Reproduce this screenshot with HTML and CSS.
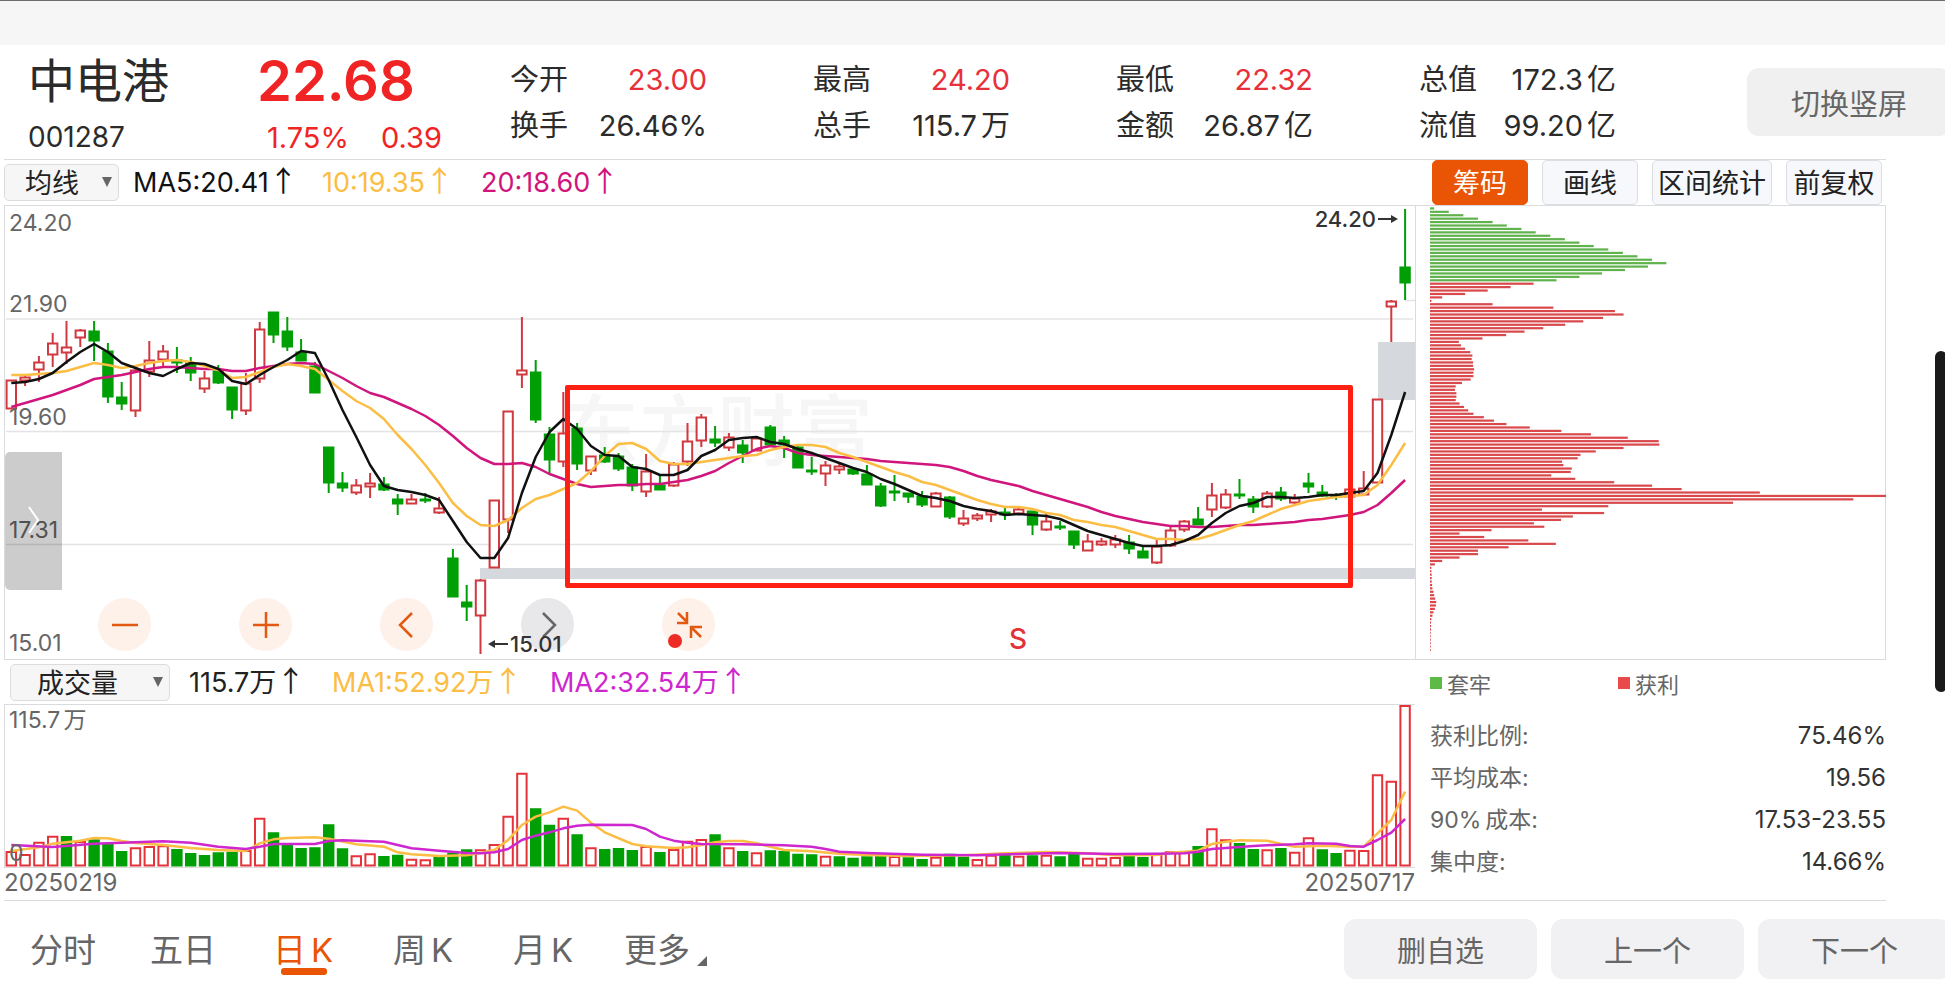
FILE: index.html
```html
<!DOCTYPE html>
<html lang="zh-CN">
<head>
    <meta charset="UTF-8">
    <meta name="viewport" content="width=device-width, initial-scale=1.0">
    <title>中电港 001287</title>
    <link rel="stylesheet" href="styles.css">
</head>
<body>
    <div class="status-bar"></div>

    <header class="header">
        <div class="stock">
            <h1>中电港</h1>
            <span>001287</span>
        </div>
        <div class="price">
            <strong>22.68</strong>
            <div class="change"><span>1.75%</span><span>0.39</span></div>
        </div>
        <dl class="quotes">
            <div><dt>今开</dt><dd class="up">23.00</dd></div>
            <div><dt>最高</dt><dd class="up">24.20</dd></div>
            <div><dt>最低</dt><dd class="up">22.32</dd></div>
            <div><dt>总值</dt><dd>172.3<i>亿</i></dd></div>
            <div><dt>换手</dt><dd>26.46%</dd></div>
            <div><dt>总手</dt><dd>115.7<i>万</i></dd></div>
            <div><dt>金额</dt><dd>26.87<i>亿</i></dd></div>
            <div><dt>流值</dt><dd>99.20<i>亿</i></dd></div>
        </dl>
        <button class="big-btn rotate-btn">切换竖屏</button>
    </header>

    <main class="main">
        <div class="toolbar">
            <label class="picker">
                <select aria-label="主图指标">
                    <option>均线</option>
                </select>
                <svg width="10" height="10" viewBox="0 0 10 10"><path d="M0 0H10L5 10Z" fill="#666"/></svg>
            </label>
            <span class="ma ma5">MA5:20.41<b>↑</b></span>
            <span class="ma ma10">10:19.35<b>↑</b></span>
            <span class="ma ma20">20:18.60<b>↑</b></span>
        </div>
        <div class="tools">
            <button class="tool active">筹码</button>
            <button class="tool">画线</button>
            <button class="tool wide">区间统计</button>
            <button class="tool">前复权</button>
        </div>

        <section class="k-chart">
            <div class="watermark">东方财富</div>
            <svg class="plot" id="kPlot" viewBox="5 206 1410 453" preserveAspectRatio="none"></svg>
            <span class="axis y1">24.20</span>
            <span class="axis y2">21.90</span>
            <span class="axis y3">19.60</span>
            <span class="axis y4">17.31</span>
            <span class="axis y5">15.01</span>
            <button class="drawer" aria-label="展开">
                <svg width="12" height="28" viewBox="0 0 12 28"><path d="M1 1L10 14L1 27" fill="none" stroke="#fff" stroke-width="2"/></svg>
            </button>
            <div class="controls">
                <button aria-label="缩小">
                    <svg width="28" height="28" viewBox="0 0 28 28"><path d="M1 14H27"/></svg>
                </button>
                <button aria-label="放大">
                    <svg width="28" height="28" viewBox="0 0 28 28"><path d="M1 14H27M14 1V27"/></svg>
                </button>
                <button aria-label="左移">
                    <svg width="28" height="28" viewBox="0 0 28 28"><path d="M19 2L7 14L19 26"/></svg>
                </button>
                <button class="off" aria-label="右移">
                    <svg width="28" height="28" viewBox="0 0 28 28"><path d="M9 2L21 14L9 26"/></svg>
                </button>
                <button aria-label="收起">
                    <svg width="28" height="28" viewBox="0 0 28 28"><path d="M3 2L12 11M12 1V12H2M26 26L17 17M16 27V16H27"/></svg>
                    <em class="dot"></em>
                </button>
            </div>
            <span class="mark mark-low"><svg width="20" height="10" viewBox="0 0 20 10"><path d="M0 5L7 1V9Z" fill="#333"/><path d="M5 5H20" stroke="#333" stroke-width="2"/></svg>15.01</span>
            <span class="mark mark-high">24.20<svg width="20" height="10" viewBox="0 0 20 10"><path d="M20 5L13 1V9Z" fill="#333"/><path d="M0 5H15" stroke="#333" stroke-width="2"/></svg></span>
            <span class="sell">S</span>
            <div class="frame"></div>
        </section>

        <section class="chips">
            <svg class="plot" id="chipPlot" viewBox="1416 206 469 453" preserveAspectRatio="none"></svg>
        </section>

        <section class="volume">
            <div class="toolbar">
                <label class="picker vol-picker">
                    <select aria-label="副图指标">
                        <option>成交量</option>
                    </select>
                    <svg width="10" height="10" viewBox="0 0 10 10"><path d="M0 0H10L5 10Z" fill="#666"/></svg>
                </label>
                <span class="ma vol">115.7万<b>↑</b></span>
                <span class="ma vol1">MA1:52.92万<b>↑</b></span>
                <span class="ma vol2">MA2:32.54万<b>↑</b></span>
            </div>
            <div class="v-chart">
                <svg class="plot" id="vPlot" viewBox="5 705 1410 162" preserveAspectRatio="none"></svg>
                <span class="axis v1">115.7<i>万</i></span>
                <span class="axis v2">0</span>
            </div>
            <div class="dates"><span>20250219</span><span>20250717</span></div>
        </section>

        <section class="chip-info">
            <div class="legend">
                <span class="trapped">套牢</span>
                <span class="profit">获利</span>
            </div>
            <dl>
                <div><dt>获利比例:</dt><dd>75.46%</dd></div>
                <div><dt>平均成本:</dt><dd>19.56</dd></div>
                <div><dt>90%<i>成本</i>:</dt><dd>17.53-23.55</dd></div>
                <div><dt>集中度:</dt><dd>14.66%</dd></div>
            </dl>
        </section>
    </main>

    <footer class="footer">
        <nav class="tabs">
            <a href="#">分时</a>
            <a href="#">五日</a>
            <a href="#" class="active">日<i>K</i></a>
            <a href="#">周<i>K</i></a>
            <a href="#">月<i>K</i></a>
            <a href="#" class="more">更多</a>
        </nav>
        <button class="big-btn">删自选</button>
        <button class="big-btn">上一个</button>
        <button class="big-btn">下一个</button>
    </footer>

    <div class="scrollbar"></div>

    <script src="chart.js"></script>
</body>
</html>
```
FILE: styles.css
```css
* {
    margin: 0;
    padding: 0;
    box-sizing: border-box;
}

body {
    position: relative;
    background-color: #fff;
    color: #2b2b2b;
    font-family: Inter, "Noto Sans CJK SC", sans-serif;
    font-size: 29px;
    overflow: hidden;
}

button, select {
    font-family: inherit;
    border: none;
    cursor: pointer;
}

i, em {
    font-style: normal;
}

.status-bar {
    height: 45px;
    background-color: #f6f6f6;
    border-top: 1px solid #6e6a6e;
}

/* header */
.header {
    position: relative;
    display: flex;
    height: 114px;
    padding-left: 28px;
}

.stock {
    width: 229px;
}

.stock h1 {
    font-size: 47px;
    font-weight: 400;
    line-height: 72px;
}

.stock span {
    display: block;
    font-size: 28px;
    line-height: 40px;
}

.price {
    width: 253px;
    color: #f02424;
}

.price strong {
    display: block;
    font-size: 56px;
    font-weight: 600;
    line-height: 72px;
}

.change {
    display: flex;
    gap: 32px;
    padding-left: 10px;
    line-height: 42px;
}

.quotes {
    display: grid;
    grid-template-columns: repeat(4, 197px);
    grid-auto-rows: 46px;
    column-gap: 106px;
    padding-top: 12px;
    line-height: 46px;
}

.quotes div {
    display: flex;
    justify-content: space-between;
}

.quotes i {
    margin-left: 4px;
}

.up {
    color: #e8303a;
}

.big-btn {
    flex: none;
    width: 193px;
    height: 60px;
    border-radius: 12px;
    background-color: #f1f1f3;
    color: #666;
    font-size: 29px;
}

.rotate-btn {
    position: absolute;
    right: -6px;
    top: 23px;
    width: 204px;
    height: 68px;
    background-color: #f0f0f0;
}

/* charts */
.main {
    display: grid;
    grid-template-columns: 1fr 471px;
    grid-template-rows: 45px 455px 240px;
    margin: 0 59px 0 4px;
    border-top: 1px solid #dcdcdc;
    border-bottom: 1px solid #dcdcdc;
}

.toolbar {
    display: flex;
    align-items: center;
    height: 44px;
    font-size: 27px;
}

.picker {
    display: flex;
    align-items: center;
    position: relative;
    width: 115px;
    margin-right: 14px;
}

.picker select {
    appearance: none;
    width: 100%;
    height: 37px;
    padding: 2px 0 0 20px;
    border: 1px solid #dcdcdc;
    border-radius: 5px;
    background-color: #f6f6f6;
    color: #222;
    font-size: 27px;
}

.picker svg {
    position: absolute;
    right: 7px;
    pointer-events: none;
}

.vol-picker {
    width: 160px;
    margin-left: 6px;
    margin-right: 19px;
}

.vol-picker select {
    padding-left: 26px;
}

.ma {
    line-height: 44px;
    padding-top: 2px;
    white-space: nowrap;
}

.ma b {
    font-family: "Noto Sans CJK SC", sans-serif;
    font-size: 29px;
    font-weight: 400;
    line-height: 1;
}

.ma5 { width: 189px; color: #111; }
.ma10 { width: 159px; color: #fbbd44; }
.ma20 { color: #d0157d; }
.vol { width: 143px; color: #222; }
.vol1 { width: 218px; color: #fbbd44; }
.vol2 { color: #cf27cf; }

.tools {
    display: flex;
    justify-content: space-between;
    padding: 0 4px 0 17px;
}

.tool {
    width: 96px;
    padding-top: 2px;
    border: 1px solid #dcdee2;
    border-radius: 5px;
    background-color: #f7f8fb;
    color: #222;
    font-size: 27px;
    line-height: 42px;
    white-space: nowrap;
}

.tool.wide {
    width: 120px;
}

.tool.active {
    background-color: #e95504;
    border-color: #e95504;
    color: #fff;
}

.k-chart, .chips, .v-chart {
    position: relative;
    border: 1px solid #dadbdd;
    border-right: none;
}

.chips {
    border-right: 1px solid #dadbdd;
}

.plot {
    position: absolute;
    left: 0;
    top: 0;
    width: 100%;
    height: 100%;
    overflow: visible;
}

.axis {
    position: absolute;
    left: 4px;
    color: #666;
    font-size: 23px;
    line-height: 28px;
}

.axis i {
    margin-left: 3px;
}

.y1 { top: 3px; }
.y2 { top: 84px; }
.y3 { top: 197px; }
.y4 { top: 310px; }
.y5 { top: 423px; }
.v1 { top: 1px; }
.v2 { bottom: 0; }

.watermark {
    position: absolute;
    left: 556px;
    top: 176px;
    color: #f6f6f7;
    font-size: 78px;
    font-weight: 500;
    line-height: 100px;
}

.drawer {
    position: absolute;
    left: 0;
    top: 246px;
    width: 57px;
    height: 138px;
    border-radius: 5px 0 0 5px;
    background-color: rgba(0, 0, 0, 0.2);
}

.controls {
    position: absolute;
    left: 93px;
    bottom: 8px;
    display: flex;
    gap: 88px;
}

.controls button {
    position: relative;
    width: 53px;
    height: 53px;
    border-radius: 50%;
    background-color: #fef1ea;
}

.controls svg {
    display: block;
    margin: auto;
    fill: none;
    stroke: #e25a12;
    stroke-width: 2.5;
}

.controls .off {
    background-color: #e8e8eb;
}

.controls .off svg {
    stroke: #666;
}

.dot {
    position: absolute;
    left: 6px;
    top: 36px;
    width: 14px;
    height: 14px;
    border-radius: 50%;
    background-color: #ee2a24;
}

.mark {
    position: absolute;
    display: flex;
    align-items: center;
    gap: 2px;
    color: #333;
    font-size: 22px;
    font-weight: 500;
    line-height: 26px;
}

.mark-low {
    left: 483px;
    top: 425px;
}

.mark-high {
    right: 17px;
    top: 0;
}

.sell {
    position: absolute;
    left: 1004px;
    top: 416px;
    color: #e2333a;
    font-size: 28px;
    font-weight: 500;
    line-height: 34px;
}

.frame {
    position: absolute;
    left: 560px;
    top: 179px;
    width: 788px;
    height: 203px;
    border: 5px solid #ff2014;
    border-radius: 2px;
}

.v-chart {
    height: 164px;
}

.dates {
    display: flex;
    justify-content: space-between;
    color: #666;
    font-size: 24px;
    line-height: 29px;
}

/* chip summary */
.chip-info {
    padding-left: 15px;
    color: #666;
    font-size: 23px;
}

.legend {
    display: flex;
    height: 46px;
    margin-bottom: 9px;
    font-size: 22px;
}

.legend span {
    display: flex;
    align-items: center;
    gap: 5px;
    width: 188px;
}

.legend span::before {
    content: "";
    width: 12px;
    height: 12px;
    background-color: #5dba47;
}

.legend .profit::before {
    background-color: #e94b4b;
}

.chip-info dl div {
    display: flex;
    justify-content: space-between;
    line-height: 42px;
}

.chip-info dt i {
    margin-left: 4px;
}

.chip-info dd {
    color: #333;
    font-size: 24px;
}

/* footer */
.footer {
    display: flex;
    gap: 14px;
    height: 92px;
    padding-top: 18px;
    margin-right: -6px;
}

.tabs {
    display: flex;
    flex: 1;
    align-items: flex-start;
    padding-left: 3px;
}

.tabs a {
    position: relative;
    width: 120px;
    color: #666;
    font-size: 33px;
    line-height: 62px;
    text-align: center;
    text-decoration: none;
}

.tabs i {
    margin-left: 5px;
}

.tabs .active {
    color: #e95504;
}

.tabs .active::after {
    content: "";
    position: absolute;
    left: 38px;
    bottom: 6px;
    width: 46px;
    height: 7px;
    border-radius: 3px;
    background-color: #e95504;
}

.tabs .more {
    width: 108px;
}

.tabs .more::after {
    content: "";
    position: absolute;
    right: 4px;
    bottom: 15px;
    border-left: 10px solid transparent;
    border-bottom: 10px solid #666;
}

.scrollbar {
    position: absolute;
    right: -2px;
    top: 351px;
    width: 12px;
    height: 341px;
    border-radius: 6px;
    background-color: #1a1a1a;
}

/* svg parts */
.plot line, .plot polyline, .plot rect {
    vector-effect: non-scaling-stroke;
}

.plot polyline {
    fill: none;
    stroke-width: 2.5;
    stroke-linejoin: round;
}

.grid { stroke: #e4e4e6; stroke-width: 1.5; }
.gap { fill: #d5d8dc; }
.red { fill: #fff; stroke: #d0393f; stroke-width: 2; }
.green { fill: #009f05; stroke: #009f05; stroke-width: 2; }
.line5 { stroke: #111; }
.line10 { stroke: #fbbd44; }
.line20 { stroke: #d0157d; }
.vline2 { stroke: #cf27cf; }
.v-chart .red { stroke: #e5333a; }
.chip-up { fill: #5fb24c; }
.chip-down { fill: #d9494c; }
```
FILE: chart.js
```js
// one row per day: colour, high, body top, body bottom, low, volume top, volume colour if it differs
const days = `
r 380 380 409 409 603|r 376 377 381 386 612|r 356 362 370 382 575|r 333 343 355 367 557
r 321 347 353 364 558 g|r 329 330 338 347 573|g 321 331 341 361 568|g 343 351 397 403 580
g 382 397 404 410 603|r 368 370 411 417 592|r 341 360 372 377 588|r 345 351 360 366 586
g 347 360 363 373 597|g 357 363 373 381 609|r 371 378 389 393 615 g|g 365 371 383 384 607
g 387 387 410 419 605|r 373 383 411 415 600|r 322 329 379 383 503|g 312 312 335 343 547
g 317 331 347 351 583|g 339 352 361 361 594|g 362 366 393 393 592|g 447 447 483 493 523
g 472 483 488 492 595|r 479 485 493 495 616|r 473 483 487 498 610|g 477 484 490 491 618
g 494 499 504 515 614|r 494 499 504 504 626|g 493 499 501 503 628 r|r 497 508 513 514 620 g
g 549 558 597 597 608|g 585 602 607 621 598|r 579 580 616 654 598|r 500 500 568 568 582
r 411 411 520 533 497|r 317 370 375 388 368|g 360 372 420 423 475|g 427 434 460 475 524
r 392 433 462 467 503|g 423 428 464 470 553|r 456 456 471 475 592|g 447 455 462 463 597
g 453 456 469 471 594|g 464 467 486 491 600|r 454 471 492 497 588|g 476 485 490 490 606
r 462 464 486 487 597|r 423 441 462 466 572|r 414 417 441 447 567|g 426 439 443 447 553
r 433 437 448 451 592|g 440 445 453 463 603|r 437 438 451 451 607|g 425 427 445 447 601
g 436 440 445 458 603|g 445 447 468 468 611|g 457 470 472 475 613|r 461 465 474 486 617
r 462 466 470 474 619 g|g 467 469 474 475 623|g 465 474 485 485 619|g 483 486 506 507 618
g 475 491 493 501 618 r|g 493 493 497 503 622|g 491 496 505 507 627|r 492 493 507 507 620
g 496 497 517 519 611|r 510 518 524 526 620 g|r 513 515 519 521 627|r 509 511 515 522 614
g 507 512 515 520 610|r 508 509 514 514 617|g 511 511 525 535 616|r 514 521 530 531 614
g 521 526 528 530 619|g 531 531 545 549 611|r 534 541 551 551 623|r 538 541 545 546 623
r 535 539 545 548 621|g 535 542 549 554 617|g 545 551 558 558 621|r 539 546 563 564 610
r 527 530 546 547 604|r 520 521 530 532 604|g 507 519 525 525 588|r 483 495 510 517 535
r 489 494 508 509 568|g 479 494 496 499 579|g 496 499 507 513 597|r 491 493 507 508 598
g 487 492 499 501 594|r 494 498 503 505 605|g 473 483 487 493 562 r|g 485 492 496 497 598
g 493 495 497 500 609|r 489 489 497 497 599|r 471 488 495 495 600|r 399 399 483 483 373
r 300 301 307 342 392|g 209 267 283 300 165 r`.trim().split(/[|\n]/).map(d => d.split(' '));

const ma5 = [383,382,379,373,362,352,344,352,363,368,373,376,369,363,364,369,381,384,375,367,360,351,353,380,410,437,465,486,490,492,495,500,521,542,558,558,538,493,457,432,419,429,446,455,456,467,469,475,475,470,456,450,440,438,437,442,444,449,453,458,463,468,472,479,484,490,496,498,501,506,509,511,515,514,515,516,519,525,531,535,539,543,546,546,545,541,535,523,513,506,503,497,497,498,497,495,495,493,491,473,435,392];
const ma10 = [375,375,374,373,371,367,363,365,368,366,363,361,360,362,366,370,378,377,372,367,364,366,369,380,391,401,408,419,435,449,465,483,503,516,525,526,520,508,499,495,489,483,471,456,444,443,449,461,464,464,462,460,458,456,455,450,447,445,445,447,453,457,462,467,472,476,482,485,490,495,500,504,507,507,509,513,515,520,522,525,527,531,535,539,539,540,539,535,530,525,521,515,509,505,501,499,497,496,495,485,465,443];
const ma20 = [407,403,399,395,390,385,379,377,375,372,369,367,367,368,369,369,371,371,368,366,364,363,364,371,378,386,393,397,403,409,416,425,436,448,458,464,464,463,467,474,479,484,487,486,485,485,484,484,482,480,476,471,463,456,449,446,448,453,455,456,457,458,459,461,462,463,464,465,467,471,476,480,483,486,491,495,499,503,507,512,516,519,522,524,526,526,527,527,526,525,525,524,523,522,520,519,517,515,512,505,493,480];

// volume averages: day index, level
const vol1 = [[0,603],[2,592],[3,581],[5,572],[6,564],[7,565],[8,573],[9,579],[11,585],[13,594],[15,600],[17,603],[18,580],[19,568],[20,564],[22,562],[23,566],[25,583],[27,590],[28,607],[29,613],[31,618],[33,616],[34,609],[35,600],[36,570],[37,525],[38,500],[39,487],[40,470],[41,482],[42,518],[43,547],[45,582],[46,589],[48,594],[49,592],[50,585],[51,577],[52,573],[53,573],[54,580],[55,590],[56,600],[58,604],[60,611],[62,615],[65,618],[69,616],[72,610],[75,606],[78,610],[80,616],[83,615],[84,608],[86,602],[87,582],[88,575],[89,571],[91,572],[92,582],[93,590],[95,587],[97,590],[98,590],[99,550],[100,510],[101,425]];
const vol2 = [[0,585],[3,591],[6,581],[9,577],[11,574],[13,578],[15,590],[17,597],[18,590],[19,582],[22,582],[23,573],[24,571],[27,575],[28,585],[29,595],[31,602],[33,609],[34,610],[35,607],[36,597],[37,570],[38,557],[39,547],[40,535],[41,527],[42,524],[45,525],[46,537],[47,560],[48,572],[49,578],[50,582],[53,583],[56,586],[58,590],[59,597],[60,605],[62,609],[66,614],[70,616],[73,612],[76,609],[80,612],[83,611],[85,610],[86,605],[87,597],[88,594],[90,588],[92,584],[93,583],[94,580],[96,581],[97,588],[98,590],[99,570],[100,548],[101,507]];

// chip distribution, first 22 are above the current price
const chips = [12,54,96,138,180,221,263,304,346,388,430,471,513,555,597,639,680,627,561,495,430,364,
    298,232,166,101,35,4,180,355,532,557,498,441,389,326,272,219,151,83,89,101,116,122,120,124,124,127,125,125,117,92,
    74,72,76,76,74,85,98,110,125,155,184,220,287,378,463,569,658,660,557,477,433,425,380,384,408,405,349,418,530,639,
    724,949,1312,1218,872,513,322,501,411,377,299,329,177,85,156,283,362,226,138,138,85,35,14,
    4,4,5,5,5,6,7,10,12,15,18,17,14,10,7,4,3,3,3,2,2,2,2,2,2];

const x = i => 11.3 + i * 13.8;
const volY = v => 650 + v / 3;
const color = c => c === 'r' ? 'red' : 'green';

function rect(cls, left, top, width, height) {
    return `<rect class="${cls}" x="${left}" y="${top}" width="${width}" height="${height}"/>`;
}

function line(cls, x1, y1, x2, y2) {
    return `<line class="${cls}" x1="${x1}" y1="${y1}" x2="${x2}" y2="${y2}"/>`;
}

function curve(cls, points) {
    return `<polyline class="${cls}" points="${points.map(p => p.join(',')).join(' ')}"/>`;
}

// K line
let k = '';
[319, 431.5, 544.5].forEach(y => k += line('grid', 6, y, 1413, y));
k += line('grid', 1405, 300.5, 1415, 300.5);
k += rect('gap', 480, 568, 935, 11);
k += rect('gap', 1378, 342, 37, 58);
days.forEach((d, i) => {
    const [c, high, top, bottom, low] = d;
    k += line(color(c), x(i), high, x(i), low);
    k += rect(color(c), x(i) - 4.7, +top + 0.5, 9.4, Math.max(bottom - top - 1, 1));
});
k += curve('line20', ma20.map((y, i) => [x(i), y]));
k += curve('line10', ma10.map((y, i) => [x(i), y]));
k += curve('line5', ma5.map((y, i) => [x(i), y]));
document.getElementById('kPlot').innerHTML = k;

// volume
let v = '';
days.forEach((d, i) => {
    const top = volY(+d[5]) + 1;
    v += rect(color(d[6] || d[0]), x(i) - 4.7, top, 9.4, 865.5 - top);
});
v += curve('line10', vol1.map(p => [x(p[0]), volY(p[1])]));
v += curve('vline2', vol2.map(p => [x(p[0]), volY(p[1])]));
document.getElementById('vPlot').innerHTML = v;

// chips
document.getElementById('chipPlot').innerHTML = chips.map((n, i) =>
    rect(i < 22 ? 'chip-up' : 'chip-down', 1430, 207.3 + i * 3.423, n / 1312 * 456, 2.2)
).join('');
```
